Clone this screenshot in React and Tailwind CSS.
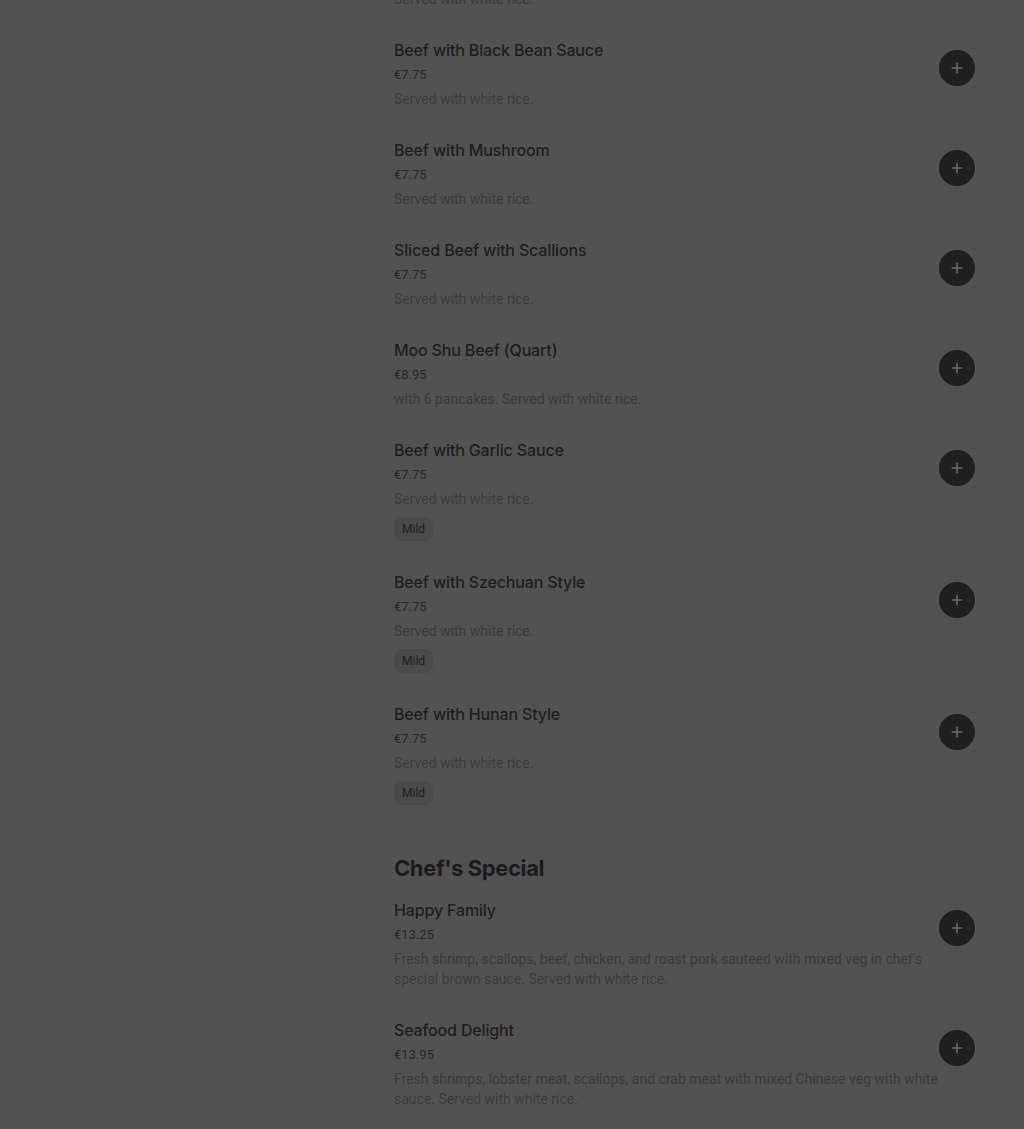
import { Plus } from "lucide-react"

const beef = [
  { name: "Beef with Broccoli", price: "€7.75", desc: "Served with white rice." },
  { name: "Beef with Black Bean Sauce", price: "€7.75", desc: "Served with white rice." },
  { name: "Beef with Mushroom", price: "€7.75", desc: "Served with white rice." },
  { name: "Sliced Beef with Scallions", price: "€7.75", desc: "Served with white rice." },
  { name: "Moo Shu Beef (Quart)", price: "€8.95", desc: "with 6 pancakes. Served with white rice." },
  { name: "Beef with Garlic Sauce", price: "€7.75", desc: "Served with white rice.", tag: "Mild" },
  { name: "Beef with Szechuan Style", price: "€7.75", desc: "Served with white rice.", tag: "Mild" },
  { name: "Beef with Hunan Style", price: "€7.75", desc: "Served with white rice.", tag: "Mild" },
]

const chefs = [
  {
    name: "Happy Family",
    price: "€13.25",
    desc: "Fresh shrimp, scallops, beef, chicken, and roast pork sauteed with mixed veg in chef's special brown sauce. Served with white rice.",
  },
  {
    name: "Seafood Delight",
    price: "€13.95",
    desc: "Fresh shrimps, lobster meat, scallops, and crab meat with mixed Chinese veg with white sauce. Served with white rice.",
  },
]

function MenuItem({ item }) {
  return (
    <div className="relative pt-[14px] pb-[15px]">
      <h3 className="text-base leading-6 font-medium tracking-[-0.15px] text-[#1d1d1d] font-['Inter',sans-serif]">
        {item.name}
      </h3>
      <p className="mt-[3px] text-[13px] leading-5 text-[#262626] font-['Roboto',sans-serif]">{item.price}</p>
      <p className="mt-1 text-sm leading-5 text-[#3a3a3a] font-['Roboto',sans-serif] pr-[12px]">{item.desc}</p>
      {item.tag && (
        <span className="mt-2 inline-flex h-6 items-center rounded-lg bg-[#4a4a4a] px-2 text-xs text-[#1d1d1d] font-['Roboto',sans-serif]">
          {item.tag}
        </span>
      )}
      <button
        aria-label={`Add ${item.name}`}
        className="absolute right-0 top-[26px] flex h-9 w-9 items-center justify-center rounded-full bg-[#1f1f1f]"
      >
        <Plus className="h-4 w-4 text-[#6a6a6a]" strokeWidth={2.5} />
      </button>
    </div>
  )
}

export default function App() {
  return (
    <div className="h-[1129px] overflow-hidden bg-[#525252]">
      <main className="ml-[394px] mr-[49px] -mt-[76px]">
        <section>
          {beef.map((item) => (
            <MenuItem key={item.name} item={item} />
          ))}
        </section>

        <section className="mt-8">
          <h2 className="h-8 text-[22px] leading-8 font-bold tracking-[-0.4px] text-[#1b1b1b] font-['Inter',sans-serif]">
            Chef's Special
          </h2>
          {chefs.map((item) => (
            <MenuItem key={item.name} item={item} />
          ))}
        </section>
      </main>
    </div>
  )
}
